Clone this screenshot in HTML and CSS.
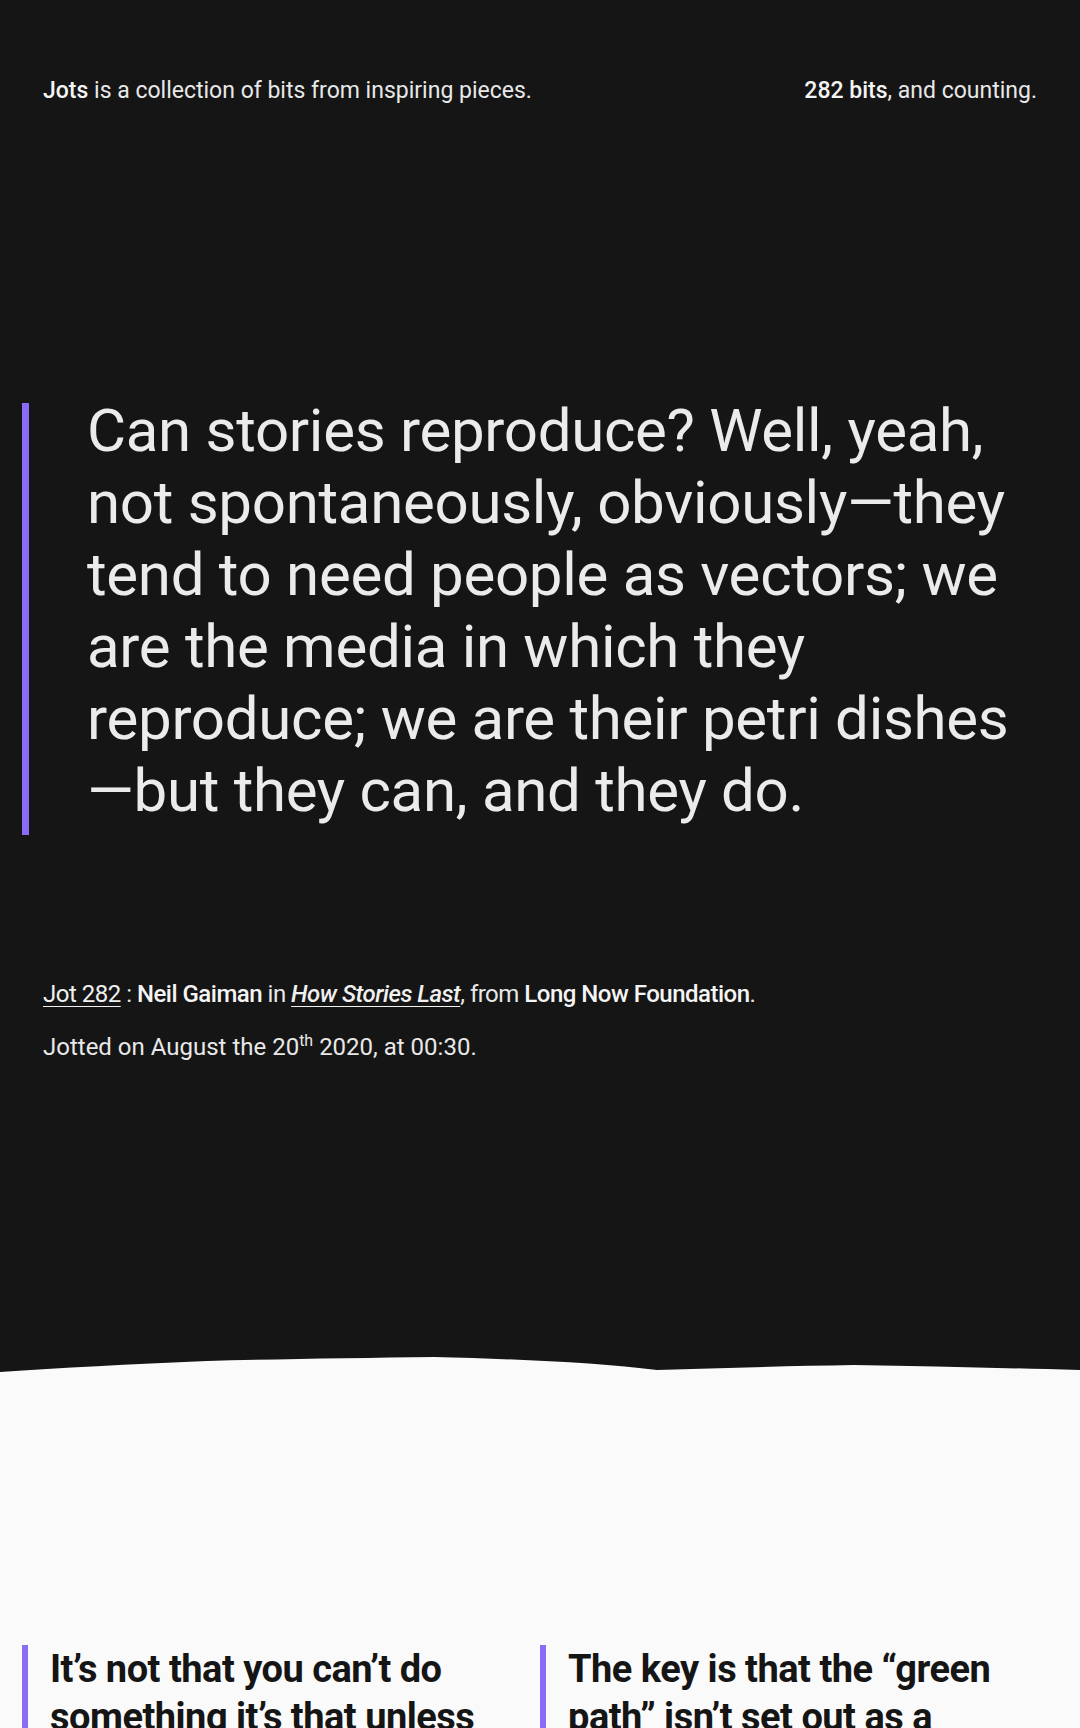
FILE: index.html
```html
<!DOCTYPE html>
<html lang="en">
<head>
<meta charset="utf-8">
<title>Jots</title>
<link rel="stylesheet" href="styles.css">
</head>
<body>
<section class="hero">
  <header class="topbar">
    <p class="intro"><strong>Jots</strong> is a collection of bits from inspiring pieces.</p>
    <p class="count"><strong>282 bits</strong>, and counting.</p>
  </header>
  <blockquote class="feature">
    <p>Can stories reproduce? Well, yeah, not spontaneously, obviously—they tend to need people as vectors; we are the media in which they reproduce; we are their petri dishes—but they can, and they do.</p>
  </blockquote>
  <div class="meta">
    <p class="source"><a href="#" class="jotlink">Jot 282</a> : <strong>Neil Gaiman</strong> in <a href="#" class="work">How Stories Last</a>, from <strong>Long Now Foundation</strong>.</p>
    <p class="date">Jotted on August the 20<sup>th</sup> 2020, at 00:30.</p>
  </div>
</section>
<section class="archive">
  <svg class="tear" viewBox="0 0 1080 16" preserveAspectRatio="none" aria-hidden="true">
    <path d="M0 0 H1080 V13 C1000 11 930 9 854 8 C790 9 720 11 657 13 C600 6 520 2 434 0 C360 1 280 2 207 4 C130 7 60 11 0 15 Z" fill="#151515"/>
  </svg>
  <div class="cards">
    <blockquote class="card"><p>It’s not that you can’t do something it’s that unless you know the right way, things go wrong.</p></blockquote>
    <blockquote class="card"><p>The key is that the “green path” isn’t set out as a mandatory rule, it’s the way of least resistance.</p></blockquote>
  </div>
</section>
</body>
</html>
```
FILE: styles.css
```css
* { box-sizing: border-box; }
html, body { margin: 0; padding: 0; }
body {
  background: #fafafa;
  font-family: Roboto, "Liberation Sans", sans-serif;
  color: #e8e8e8;
}
p { margin: 0; }
.hero {
  background: #151515;
  padding: 0 43px 0 22px;
  height: 1357px;
}
.topbar {
  display: flex;
  justify-content: space-between;
  padding: 77px 0 0 21px;
  font-size: 23px;
  line-height: 28px;
  letter-spacing: 0;
}
.topbar strong { font-weight: 500; color: #f4f4f4; }
.feature {
  display: flow-root;
  margin: 298px 0 0 0;
  border-left: 7px solid #8b6cf6;
  padding: 0 10px 0 58px;
}
.feature p {
  font-size: 60px;
  line-height: 72px;
  letter-spacing: -0.3px;
  color: #ebebeb;
  margin-top: -8px;
  margin-bottom: 8px;
}
.meta {
  margin-top: 144px;
  padding-left: 21px;
  font-size: 24px;
}
.source { line-height: 30px; letter-spacing: -0.5px; }
.source strong { font-weight: 500; color: #f4f4f4; }
.source a { color: #f0f0f0; text-decoration: underline; text-underline-offset: 4px; text-decoration-thickness: 1px; }
.source .work { font-style: italic; font-weight: 500; }
.date { margin-top: 23px; line-height: 30px; letter-spacing: 0; }
.date sup { font-size: 16px; line-height: 0; }
.archive { background: #fafafa; }
.tear { display: block; width: 100%; height: 16px; }
.cards {
  display: grid;
  grid-template-columns: 1fr 1fr;
  padding: 272px 22px 0 22px;
}
.card {
  margin: 0;
  border-left: 6px solid #8b6cf6;
  padding-left: 22px;
  padding-right: 30px;
}
.card p {
  font-size: 38px;
  line-height: 48px;
  font-weight: 700;
  color: #151515;
  letter-spacing: -0.5px;
}
```
